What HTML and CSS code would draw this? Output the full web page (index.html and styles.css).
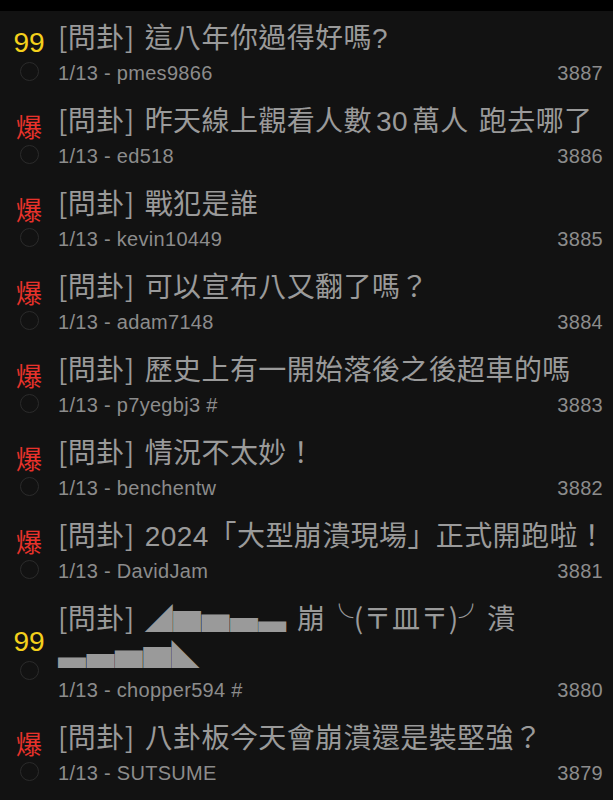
FILE: index.html
```html
<!DOCTYPE html>
<html lang="zh-Hant">
<head>
<meta charset="utf-8">
<link rel="stylesheet" href="styles.css">
</head>
<body>
<div class="topbar"></div>
<ul class="list">
  <li class="row">
    <div class="side"><span class="badge hot99">99</span><span class="dot"></span></div>
    <div class="main">
      <div class="title"><span class="cjk">[問卦]</span> 這八年你過得好嗎?</div>
      <div class="meta"><span>1/13 - pmes9866</span><span>3887</span></div>
    </div>
  </li>
  <li class="row">
    <div class="side"><span class="badge boom">爆</span><span class="dot"></span></div>
    <div class="main">
      <div class="title"><span class="cjk">[問卦]</span> 昨天線上觀看人數<span class="num">30</span>萬人 跑去哪了</div>
      <div class="meta"><span>1/13 - ed518</span><span>3886</span></div>
    </div>
  </li>
  <li class="row">
    <div class="side"><span class="badge boom">爆</span><span class="dot"></span></div>
    <div class="main">
      <div class="title"><span class="cjk">[問卦]</span> 戰犯是誰</div>
      <div class="meta"><span>1/13 - kevin10449</span><span>3885</span></div>
    </div>
  </li>
  <li class="row">
    <div class="side"><span class="badge boom">爆</span><span class="dot"></span></div>
    <div class="main">
      <div class="title"><span class="cjk">[問卦]</span> 可以宣布八又翻了嗎？</div>
      <div class="meta"><span>1/13 - adam7148</span><span>3884</span></div>
    </div>
  </li>
  <li class="row">
    <div class="side"><span class="badge boom">爆</span><span class="dot"></span></div>
    <div class="main">
      <div class="title"><span class="cjk">[問卦]</span> 歷史上有一開始落後之後超車的嗎</div>
      <div class="meta"><span>1/13 - p7yegbj3 #</span><span>3883</span></div>
    </div>
  </li>
  <li class="row">
    <div class="side"><span class="badge boom">爆</span><span class="dot"></span></div>
    <div class="main">
      <div class="title"><span class="cjk">[問卦]</span> 情況不太妙！</div>
      <div class="meta"><span>1/13 - benchentw</span><span>3882</span></div>
    </div>
  </li>
  <li class="row">
    <div class="side"><span class="badge boom">爆</span><span class="dot"></span></div>
    <div class="main">
      <div class="title"><span class="cjk">[問卦]</span> 2024「大型崩潰現場」正式開跑啦！</div>
      <div class="meta"><span>1/13 - DavidJam</span><span>3881</span></div>
    </div>
  </li>
  <li class="row">
    <div class="side"><span class="badge hot99">99</span><span class="dot"></span></div>
    <div class="main">
      <div class="title"><span class="cjk">[問卦]</span> <span class="cjk">◢▆▅▄▃</span> <span class="cjk">崩╰(〒皿〒)╯潰</span> <span class="cjk">▃▄▅▆◣</span></div>
      <div class="meta"><span>1/13 - chopper594 #</span><span>3880</span></div>
    </div>
  </li>
  <li class="row">
    <div class="side"><span class="badge boom">爆</span><span class="dot"></span></div>
    <div class="main">
      <div class="title"><span class="cjk">[問卦]</span> 八卦板今天會崩潰還是裝堅強？</div>
      <div class="meta"><span>1/13 - SUTSUME</span><span>3879</span></div>
    </div>
  </li>
</ul>
</body>
</html>
```

FILE: styles.css
```css
html, body {
  margin: 0;
  padding: 0;
  background: #121212;
}

body {
  font-family: "Liberation Sans", "Noto Sans CJK TC", sans-serif;
  overflow: hidden;
}

.topbar {
  height: 11px;
  background: #000;
}

.list {
  list-style: none;
  margin: 0;
  padding: 0;
}

.row {
  display: flex;
  padding: 10px 0 7px 0;
}

.side {
  width: 58px;
  flex: none;
  display: flex;
  flex-direction: column;
  align-items: center;
  justify-content: center;
}

.badge {
  line-height: 30px;
  height: 30px;
}

.hot99 {
  color: #f4d01c;
  font-size: 28px;
}

.boom {
  color: #e8322b;
  font-size: 26px;
  font-family: "Noto Sans CJK TC", sans-serif;
  line-height: 30px;
}

.dot {
  width: 17px;
  height: 17px;
  margin-top: 4px;
  border: 1.5px solid #2b2b2b;
  border-radius: 50%;
}

.main {
  flex: 1;
  min-width: 0;
}

.title {
  color: #9a9a9a;
  font-size: 28px;
  line-height: 36px;
  letter-spacing: 0.4px;
  word-spacing: 2px;
  padding-right: 2px;
}

.cjk {
  font-family: "Noto Sans CJK TC", sans-serif;
  line-height: 1;
  word-spacing: 0;
}

.num {
  margin: 0 4px;
}

.meta {
  display: flex;
  justify-content: space-between;
  margin-top: 2px;
  padding-right: 10px;
  color: #8c8c8c;
  font-size: 20px;
  line-height: 28px;
  letter-spacing: 0.3px;
}
```
